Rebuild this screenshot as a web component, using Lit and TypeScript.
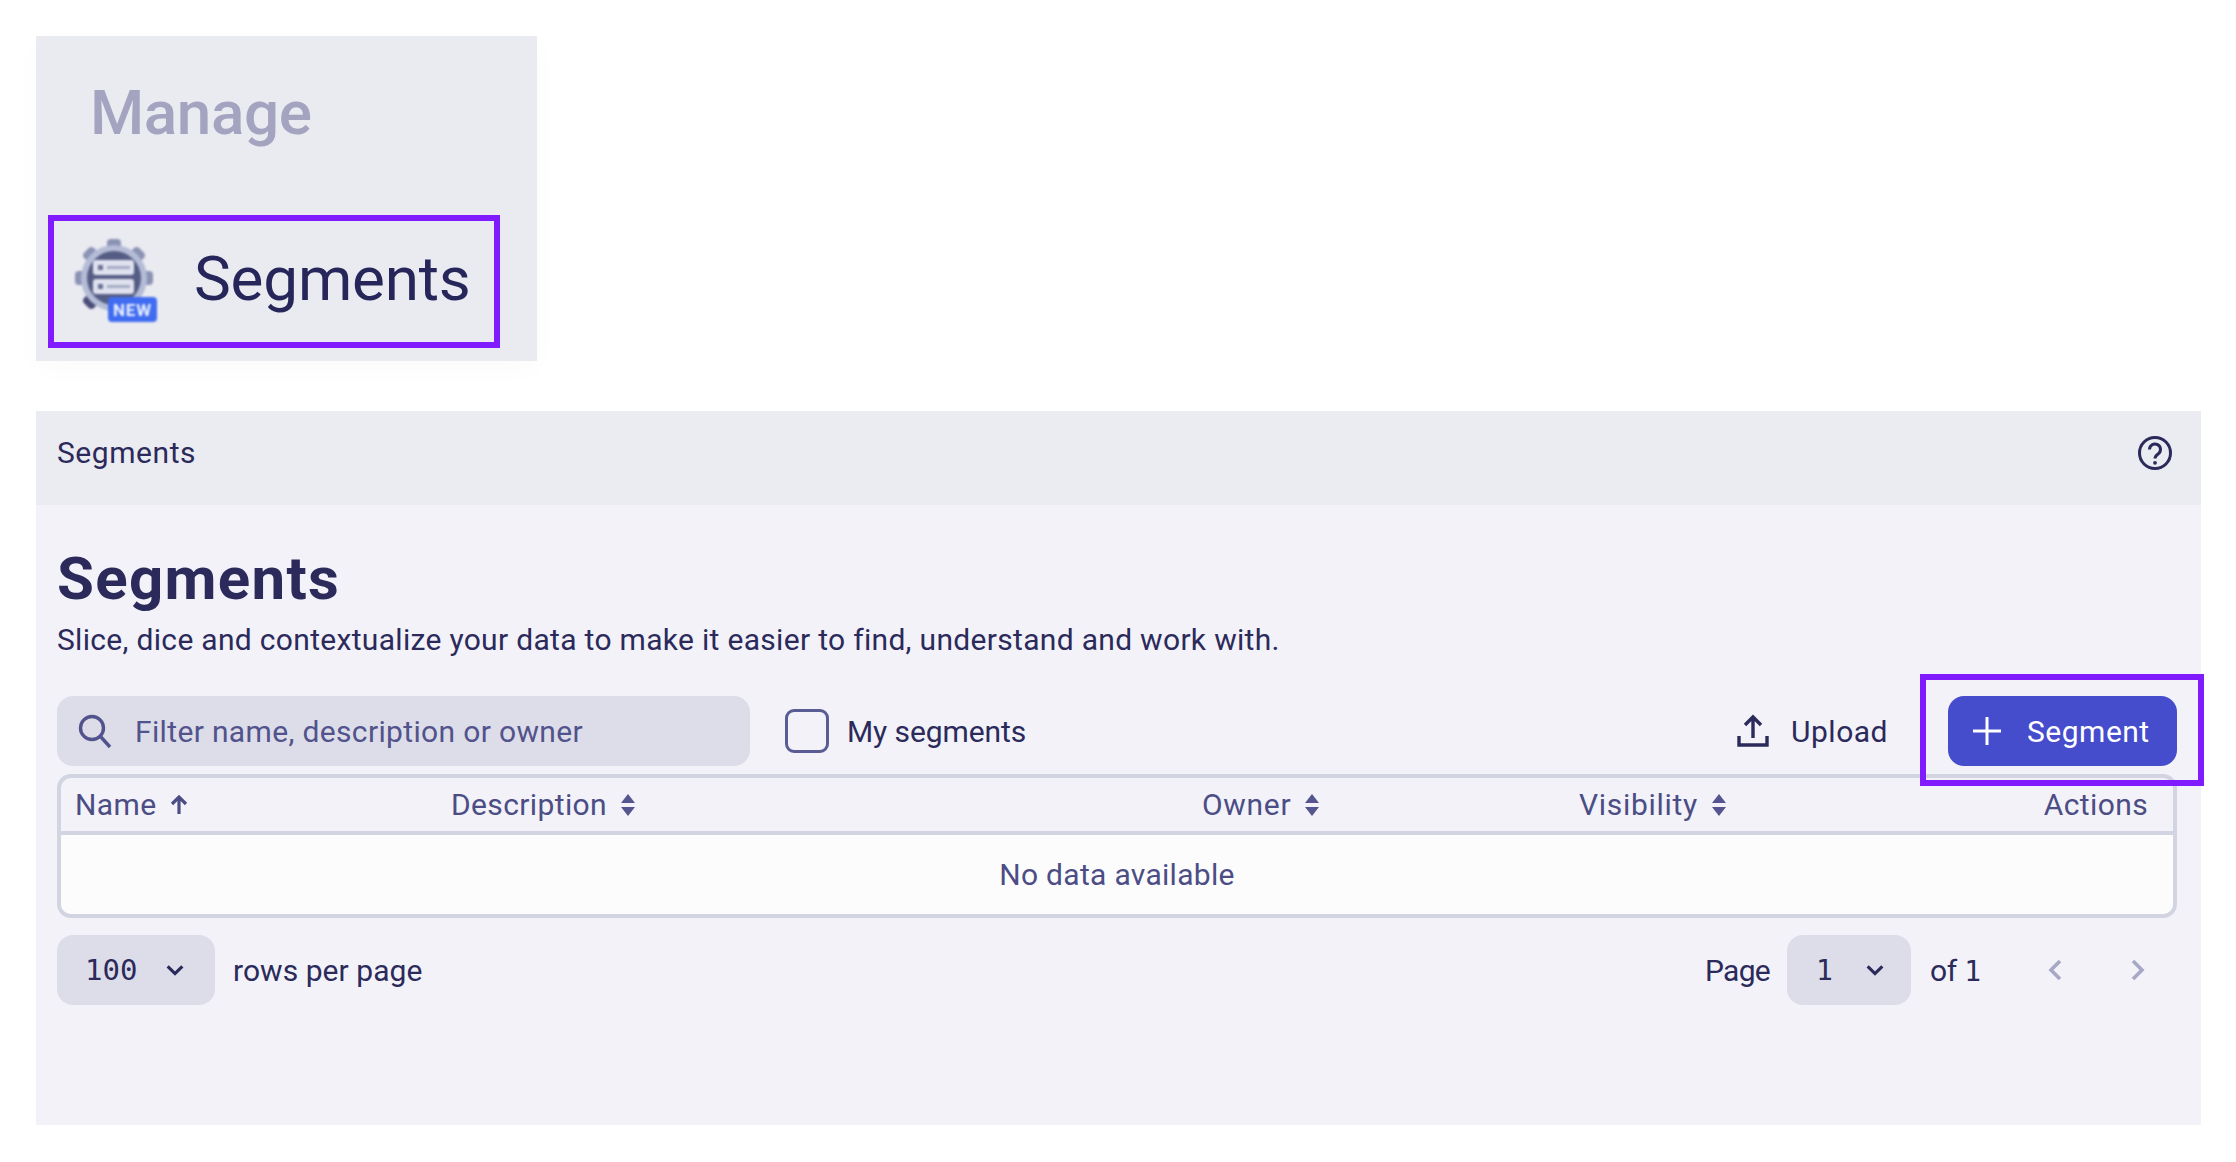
import { LitElement, html, css } from "lit";
import { customElement } from "lit/decorators.js";

const sort = html`<svg class="sort" viewBox="0 0 16 24"><path d="M8 1 15 10H1ZM8 23 1 14H15Z" fill="currentColor"/></svg>`;
const chev = html`<svg class="chev" viewBox="0 0 24 24"><path d="M4 8l8 8 8-8" fill="none" stroke="currentColor" stroke-width="3.4"/></svg>`;

@customElement("app-root")
export class AppRoot extends LitElement {
  static styles = css`
    :host { display: block; width: 2236px; height: 1162px; background: #fff; box-sizing: border-box; padding: 36px 0 0 36px;
      font-family: Roboto, "Noto Sans", sans-serif; color: #2b2a5b; font-size: 30px; letter-spacing: .31px; overflow: hidden; }
    .card { width: 501px; height: 325px; background: #eaebf1; box-sizing: border-box; padding: 41px 0 0 12px; box-shadow: 0 8px 30px rgba(60,60,100,.02); }
    .manage { font-size: 62px; line-height: 72px; font-weight: 500; color: #a4a4c1; margin-left: 42px; height: 138px; letter-spacing: -.4px; }
    .manage span { display: inline-block; filter: blur(.7px); }
    .nav { width: 452px; height: 133px; box-sizing: border-box; border: 6px solid #801bff; display: flex; align-items: center; padding-left: 19px; gap: 37px; padding-bottom: 6px; }
    .nav span { font-size: 62px; letter-spacing: -.2px; color: #26265a; filter: blur(.6px); }
    .gear { width: 84px; height: 86px; flex: none; filter: blur(.8px); margin-top: 4px; }
    .panel { margin-top: 50px; width: 2165px; height: 714px; background: #f2f2f8; }
    .crumb { height: 94px; box-sizing: border-box; background: #ebecf1; display: flex; align-items: center; justify-content: space-between; padding: 0 27px 11px 21px; }
    .crumb span { letter-spacing: .55px; }
    .help { width: 38px; height: 38px; margin-top: 1px; }
    .body { padding: 0 24px 0 21px; }
    h1 { margin: 0; padding-top: 39px; font-size: 60px; line-height: 70px; font-weight: 700; letter-spacing: 1.3px; }
    .desc { line-height: 36px; margin-top: 8px; }
    .tools { display: flex; align-items: center; height: 70px; margin-top: 38px; }
    .search { width: 693px; height: 70px; background: #dcdde8; border-radius: 16px; display: flex; align-items: center; padding-left: 20px; box-sizing: border-box; gap: 22px; color: #52538c; }
    .search span { letter-spacing: .35px; }
    .search svg { width: 36px; height: 36px; }
    .box { width: 44px; height: 44px; box-sizing: border-box; border: 3px solid #5a5c94; border-radius: 9px; margin-left: 35px; }
    .lab { margin-left: 18px; letter-spacing: -.1px; }
    .spacer { flex: 1; }
    .upload { display: flex; align-items: center; gap: 21px; margin-right: 60px; }
    .upload svg { width: 34px; height: 34px; }
    .upload span { letter-spacing: .5px; }
    .cta { position: relative; width: 229px; height: 70px; border-radius: 16px; background: #454dcd; color: #fff; display: flex; align-items: center; box-sizing: border-box; padding-left: 22px; gap: 23px; letter-spacing: .5px; }
    .cta svg { width: 34px; height: 34px; }
    .mark { position: absolute; top: -22px; bottom: -20px; left: -28px; right: -27px; border: 6px solid #801bff; }
    .table { margin-top: 8px; height: 144px; box-sizing: border-box; border: 4px solid #d2d4e2; border-radius: 14px; color: #4c4d85; overflow: hidden; letter-spacing: .38px; }
    .head { display: grid; grid-template-columns: 376px 751px 377px 1fr auto; height: 53px; border-bottom: 4px solid #d2d4e2; align-items: center; padding-left: 14px; }
    .th { display: flex; align-items: center; gap: 13px; }
    .th.w { letter-spacing: .7px; }
    .th:last-child { justify-content: flex-end; padding-right: 25px; }
    .sort { width: 16px; height: 24px; color: #55568f; }
    .arrow { width: 20px; height: 22px; }
    .row { height: 79px; background: #fcfcfd; display: flex; align-items: center; justify-content: center; letter-spacing: .3px; }
    .foot { display: flex; align-items: center; height: 70px; margin-top: 17px; }
    .sel { height: 70px; background: #dcdde8; border-radius: 16px; display: flex; align-items: center; box-sizing: border-box; }
    .chev { width: 22px; height: 22px; }
    .rows { width: 158px; padding-left: 28px; gap: 27px; font-family: "DejaVu Sans Mono", monospace; font-size: 29px; letter-spacing: 0; }
    .rpp { margin-left: 18px; letter-spacing: .05px; }
    .pg { margin-left: 18px; letter-spacing: -.7px; }
    .psel { width: 124px; margin-left: 17px; padding-left: 29px; gap: 31px; }
    .mono { font-family: "DejaVu Sans Mono", monospace; font-size: 28px; letter-spacing: 0; }
    .of { margin-left: 19px; letter-spacing: -.3px; }
    .nv { width: 16px; height: 26px; color: #a7a8c5; }
    .nv.a { margin-left: 66px; }
    .nv.b { margin-left: 67px; margin-right: 31px; }
  `;

  render() {
    return html`
      <div class="card">
        <div class="manage"><span>Manage</span></div>
        <div class="nav">
          <svg class="gear" viewBox="0 0 84 86">
            <g fill="#8b93b5">
              <rect x="34" y="1" width="14" height="12" rx="4"/>
              <rect x="34" y="1" width="14" height="12" rx="4" transform="rotate(45 41 40)"/>
              <rect x="34" y="1" width="14" height="12" rx="4" transform="rotate(90 41 40)"/>
              <rect x="34" y="1" width="14" height="12" rx="4" transform="rotate(-45 41 40)"/>
              <rect x="34" y="1" width="14" height="12" rx="4" transform="rotate(-90 41 40)"/>
              <rect x="34" y="1" width="14" height="12" rx="4" transform="rotate(-135 41 40)" fill="#4a4d78"/>
            </g>
            <circle cx="41" cy="40" r="33" fill="#b4bcd6"/>
            <circle cx="41" cy="40" r="27" fill="#565d85"/>
            <rect x="20" y="22" width="41" height="15" rx="3" fill="#dfe2ee"/>
            <rect x="20" y="41" width="41" height="15" rx="3" fill="#dfe2ee"/>
            <rect x="25" y="27" width="5" height="5" fill="#6a7196"/>
            <rect x="25" y="46" width="5" height="5" fill="#6a7196"/>
            <rect x="34" y="28" width="23" height="3" fill="#a4aac4"/>
            <rect x="34" y="47" width="23" height="3" fill="#a4aac4"/>
            <rect x="35" y="59" width="49" height="25" rx="4" fill="#3f6cf0"/>
            <text x="59.500" y="77.500" text-anchor="middle" font-family="Roboto, sans-serif" font-weight="700" font-size="17" letter-spacing=".8" fill="#eef2ff">NEW</text>
          </svg>
          <span>Segments</span>
        </div>
      </div>
      <div class="panel">
        <div class="crumb">
          <span>Segments</span>
          <svg class="help" viewBox="0 0 38 38" fill="none" stroke="#2b2a5b" stroke-width="3">
            <circle cx="19" cy="19" r="15.500"/>
            <path d="M13.500 15.500a5.500 5.500 0 1 1 8.600 4.500c-2 1.400-3.100 2.200-3.100 4.500"/>
            <circle cx="19" cy="28.800" r="1.900" fill="#2b2a5b" stroke="none"/>
          </svg>
        </div>
        <div class="body">
          <h1>Segments</h1>
          <div class="desc">Slice, dice and contextualize your data to make it easier to find, understand and work with.</div>
          <div class="tools">
            <div class="search">
              <svg viewBox="0 0 36 36" fill="none" stroke="#52538c" stroke-width="3.400"><circle cx="15" cy="15" r="11.500"/><path d="M23.500 23.500 33 34"/></svg>
              <span>Filter name, description or owner</span>
            </div>
            <div class="box"></div>
            <span class="lab">My segments</span>
            <div class="spacer"></div>
            <div class="upload">
              <svg viewBox="0 0 34 34" fill="none" stroke="#2b2a5b" stroke-width="3.400"><path d="M17 24V4M9 11l8-8 8 8M3 22v9h28v-9"/></svg>
              <span>Upload</span>
            </div>
            <div class="cta">
              <svg viewBox="0 0 34 34" fill="none" stroke="#fff" stroke-width="3"><path d="M17 3v28M3 17h28"/></svg>
              <span>Segment</span>
              <div class="mark"></div>
            </div>
          </div>
          <div class="table">
            <div class="head">
              <div class="th">Name <svg class="arrow" viewBox="0 0 20 22" fill="none" stroke="#4c4d85" stroke-width="3.200"><path d="M10 20V3M3 10l7-7 7 7"/></svg></div>
              <div class="th">Description ${sort}</div>
              <div class="th w">Owner ${sort}</div>
              <div class="th w">Visibility ${sort}</div>
              <div class="th">Actions</div>
            </div>
            <div class="row">No data available</div>
          </div>
          <div class="foot">
            <div class="sel rows">100 ${chev}</div>
            <span class="rpp">rows per page</span>
            <div class="spacer"></div>
            <span class="pg">Page</span>
            <div class="sel psel"><span class="mono">1</span> ${chev}</div>
            <span class="of">of <span class="mono">1</span></span>
            <svg class="nv a" viewBox="0 0 16 26" fill="none" stroke="currentColor" stroke-width="3.600"><path d="M13 4 4 13l9 9"/></svg>
            <svg class="nv b" viewBox="0 0 16 26" fill="none" stroke="currentColor" stroke-width="3.600"><path d="M3 4l9 9-9 9"/></svg>
          </div>
        </div>
      </div>
    `;
  }
}
